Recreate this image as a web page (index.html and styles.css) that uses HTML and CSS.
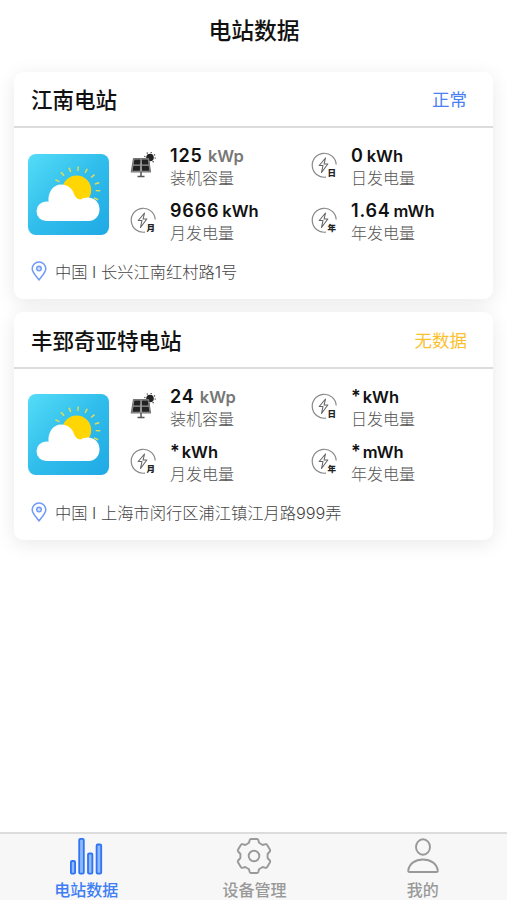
FILE: index.html
```html
<!DOCTYPE html>
<html lang="zh-CN">
<head>
  <meta charset="UTF-8">
  <meta name="viewport" content="width=device-width, initial-scale=1.0">
  <title>电站数据</title>
  <link rel="stylesheet" href="styles.css">
</head>
<body>
  <!-- shared icons -->
  <svg class="sprite" width="0" height="0">
    <defs>
      <linearGradient id="sky" x1="0" y1="0" x2="1" y2="1">
        <stop offset="0" stop-color="#54dcf8"/>
        <stop offset="0.5" stop-color="#30bdeb"/>
        <stop offset="1" stop-color="#20a9e5"/>
      </linearGradient>
    </defs>
    <symbol id="weather" viewBox="0 0 81 81">
      <rect width="81" height="81" rx="8" fill="url(#sky)"/>
      <circle cx="48.700" cy="36" r="14.500" fill="#ffd602"/>
      <circle cx="48.700" cy="36" r="21.300" fill="none" stroke="#dfdc55" stroke-width="4.600" stroke-dasharray="1.500 6.865"/>
      <path d="M18.300 67a9.800 9.800 0 0 1 0-19.600c1 0 1.500.1 2.200.3C19.500 38.500 25 30.500 33 30.500c6.500 0 11.500 4 13 9.500 1 3 3 5.300 6.500 5.500 2-1.300 4.500-2 7.500-2 6.500 0 11.500 5 11.500 11.700C71.500 62 67 67 60.500 67z" fill="#fff"/>
    </symbol>
    <symbol id="solar" viewBox="0 0 27 27">
      <circle cx="20" cy="5.500" r="3.800" fill="#222"/>
      <circle cx="20" cy="5.500" r="5.200" fill="none" stroke="#444" stroke-width="1.200" stroke-dasharray="1.200 2.884"/>
      <path d="M3.500 6.500h15l2 13.500H1.300z" fill="#999" stroke="#777" stroke-width="1.200" stroke-linejoin="round"/>
      <path d="M4.400 7.600h6l-.3 5H3.600zM11.800 7.600h6l.7 5h-6.500zM3.400 13.800h6.700l-.2 5H2.600zM11.900 13.800h6.800l.7 5h-7.300z" fill="#222"/>
      <path d="M11 20v4M7.500 24.500h7" stroke="#555" stroke-width="1.500"/>
    </symbol>
    <symbol id="bolt" viewBox="0 0 27 27">
      <path d="M25.200 12.500A12 12 0 1 0 15 25.100" fill="none" stroke="#888" stroke-width="1.200"/>
      <path d="M14.500 6L8.200 13.500h3.800l-1.500 7 6.300-8.500h-3.700z" fill="none" stroke="#666" stroke-width="1.100" stroke-linejoin="round"/>
    </symbol>
    <symbol id="pin" viewBox="0 0 16 20">
      <path d="M8 18.800C6.500 16.500 1.200 11.800 1.200 7.800a6.800 6.800 0 0 1 13.600 0c0 4-5.300 8.700-6.800 11z" fill="none" stroke="#6f9bf6" stroke-width="1.500"/>
      <circle cx="8" cy="7.600" r="2.300" fill="#cfdefd" stroke="#6f9bf6" stroke-width="1.400"/>
    </symbol>
  </svg>

  <h1 class="page-title">电站数据</h1>

  <main class="stations">
    <section class="card">
      <div class="card-header">
        <h2>江南电站</h2>
        <span class="status normal">正常</span>
      </div>
      <div class="card-body">
        <svg class="weather"><use href="#weather"/></svg>
        <div class="stats">
          <div class="stat">
            <svg class="stat-icon"><use href="#solar"/></svg>
            <div>
              <p class="value">125 <span class="unit light">kWp</span></p>
              <p class="label">装机容量</p>
            </div>
          </div>
          <div class="stat">
            <svg class="stat-icon"><use href="#bolt"/><text x="16.500" y="23.500">日</text></svg>
            <div>
              <p class="value">0<span class="unit">kWh</span></p>
              <p class="label">日发电量</p>
            </div>
          </div>
          <div class="stat">
            <svg class="stat-icon"><use href="#bolt"/><text x="16.500" y="23.500">月</text></svg>
            <div>
              <p class="value">9666<span class="unit">kWh</span></p>
              <p class="label">月发电量</p>
            </div>
          </div>
          <div class="stat">
            <svg class="stat-icon"><use href="#bolt"/><text x="16.500" y="23.500">年</text></svg>
            <div>
              <p class="value">1.64<span class="unit">mWh</span></p>
              <p class="label">年发电量</p>
            </div>
          </div>
        </div>
      </div>
      <div class="address">
        <svg class="pin"><use href="#pin"/></svg>
        <span>中国 I 长兴江南红村路1号</span>
      </div>
    </section>

    <section class="card">
      <div class="card-header">
        <h2>丰郅奇亚特电站</h2>
        <span class="status nodata">无数据</span>
      </div>
      <div class="card-body">
        <svg class="weather"><use href="#weather"/></svg>
        <div class="stats">
          <div class="stat">
            <svg class="stat-icon"><use href="#solar"/></svg>
            <div>
              <p class="value">24 <span class="unit light">kWp</span></p>
              <p class="label">装机容量</p>
            </div>
          </div>
          <div class="stat">
            <svg class="stat-icon"><use href="#bolt"/><text x="16.500" y="23.500">日</text></svg>
            <div>
              <p class="value empty">*<span class="unit">kWh</span></p>
              <p class="label">日发电量</p>
            </div>
          </div>
          <div class="stat">
            <svg class="stat-icon"><use href="#bolt"/><text x="16.500" y="23.500">月</text></svg>
            <div>
              <p class="value empty">*<span class="unit">kWh</span></p>
              <p class="label">月发电量</p>
            </div>
          </div>
          <div class="stat">
            <svg class="stat-icon"><use href="#bolt"/><text x="16.500" y="23.500">年</text></svg>
            <div>
              <p class="value empty">*<span class="unit">mWh</span></p>
              <p class="label">年发电量</p>
            </div>
          </div>
        </div>
      </div>
      <div class="address">
        <svg class="pin"><use href="#pin"/></svg>
        <span>中国 I 上海市闵行区浦江镇江月路999弄</span>
      </div>
    </section>
  </main>

  <nav class="tabbar">
    <a class="tab active">
      <svg viewBox="0 0 36 38">
        <g fill="#8fb9fb" stroke="#2f74f2" stroke-width="1.800">
          <rect x="2.900" y="24" width="4.200" height="12.600" rx="1.200"/>
          <rect x="11.200" y="1.900" width="4.600" height="34.700" rx="1.200"/>
          <rect x="20" y="16.500" width="4.400" height="20.100" rx="1.200"/>
          <rect x="28.600" y="7.500" width="4.600" height="29.100" rx="1.200"/>
        </g>
      </svg>
      <span>电站数据</span>
    </a>
    <a class="tab">
      <svg viewBox="-18 -19 36 38">
        <g fill="none" stroke="#999" stroke-width="1.900" stroke-linejoin="round">
          <path d="M-3 -17H3Q4 -17 4.300 -16L5 -13.200L8.700 -11L11.500 -11.800Q12.600 -12 13.200 -11L16 -6.200Q16.500 -5.200 15.800 -4.500L13.600 -2V2L15.800 4.500Q16.500 5.200 16 6.200L13.200 11Q12.600 12 11.500 11.800L8.700 11L5 13.200L4.300 16Q4 17 3 17H-3Q-4 17 -4.300 16L-5 13.200L-8.700 11L-11.500 11.800Q-12.600 12 -13.200 11L-16 6.200Q-16.500 5.200 -15.800 4.500L-13.600 2V-2L-15.800 -4.500Q-16.500 -5.200 -16 -6.200L-13.200 -11Q-12.600 -12 -11.500 -11.800L-8.700 -11L-5 -13.200L-4.300 -16Q-4 -17 -3 -17z"/>
          <circle r="5.300"/>
        </g>
      </svg>
      <span>设备管理</span>
    </a>
    <a class="tab">
      <svg viewBox="0 0 36 38">
        <g fill="none" stroke="#999" stroke-width="1.900" stroke-linejoin="round">
          <ellipse cx="18" cy="10" rx="7" ry="7.700"/>
          <path d="M4.500 35c-1 0-1.500-.5-1.300-1.500C4.300 26.500 10.300 22.500 18 22.500s13.700 4 14.800 11c.2 1-.3 1.500-1.300 1.500z"/>
        </g>
      </svg>
      <span>我的</span>
    </a>
  </nav>
</body>
</html>
```

FILE: styles.css
```css
* {
  box-sizing: border-box;
}

body {
  margin: 0;
  height: 100vh;
  display: flex;
  flex-direction: column;
  overflow: hidden;
  background-color: #fff;
  font-family: Inter, "Noto Sans CJK SC", sans-serif;
}

h1, h2, p {
  margin: 0;
}

.sprite {
  display: block;
  flex: none;
}

.page-title {
  padding: 15px 0 0 1px;
  height: 71.5px;
  font-size: 22.8px;
  font-weight: 500;
  line-height: 32px;
  text-align: center;
  color: #111;
}

.stations {
  flex: 1;
  display: flex;
  flex-direction: column;
  gap: 13px;
  padding: 0 14px;
}

.card {
  height: 227.5px;
  border-radius: 9px;
  background-color: #fff;
  box-shadow: 0 4px 20px rgba(0, 0, 0, 0.09);
}

.card-header {
  display: flex;
  justify-content: space-between;
  align-items: center;
  height: 56.5px;
  padding: 0 26px 0 17px;
  border-bottom: 2px solid #dcdcdc;
}

.card-header h2 {
  font-size: 21.5px;
  font-weight: 500;
  color: #111;
}

.status {
  font-size: 17.5px;
}

.normal {
  color: #4a80f5;
}

.nodata {
  color: #fbc02d;
}

.card-body {
  display: flex;
  padding: 16px 0 0 14px;
}

.weather {
  width: 81px;
  height: 81px;
  margin-top: 9.5px;
}

.stats {
  display: grid;
  grid-template-columns: 181px 181px;
  grid-auto-rows: 55px;
  height: 100px;
  margin-left: 21px;
}

.stat {
  display: flex;
  gap: 13px;
}

.stat-icon {
  width: 27px;
  height: 27px;
  margin-top: 8px;
}

.stat-icon text {
  font-size: 8.5px;
  font-weight: 900;
  fill: #222;
}

.value {
  height: 23px;
  font-size: 18px;
  font-weight: 600;
  line-height: 23px;
  letter-spacing: 0.8px;
  color: #111;
}

.value.empty {
  letter-spacing: -1px;
}

.unit {
  margin-left: 3px;
  font-size: 16.5px;
  letter-spacing: 0;
}

.unit.light {
  margin-left: 0;
  color: #777;
}

.label {
  font-size: 16px;
  font-weight: 300;
  line-height: 23px;
  color: #555;
}

.address {
  display: flex;
  align-items: center;
  gap: 8px;
  height: 24px;
  margin-top: 15px;
  padding-left: 17px;
  font-size: 16.25px;
  font-weight: 300;
  color: #444;
}

.pin {
  width: 16px;
  height: 20px;
}

.tabbar {
  display: grid;
  grid-template-columns: repeat(3, 1fr);
  height: 68px;
  padding-left: 2px;
  border-top: 2px solid #dcdcdc;
  background-color: #f7f7f7;
}

.tab {
  display: flex;
  flex-direction: column;
  align-items: center;
  gap: 2.5px;
  padding-top: 3px;
  font-size: 16px;
  font-weight: 500;
  line-height: 24px;
  color: #999;
}

.tab svg {
  width: 36px;
  height: 38px;
}

.tab.active {
  color: #3d7df5;
}
```
